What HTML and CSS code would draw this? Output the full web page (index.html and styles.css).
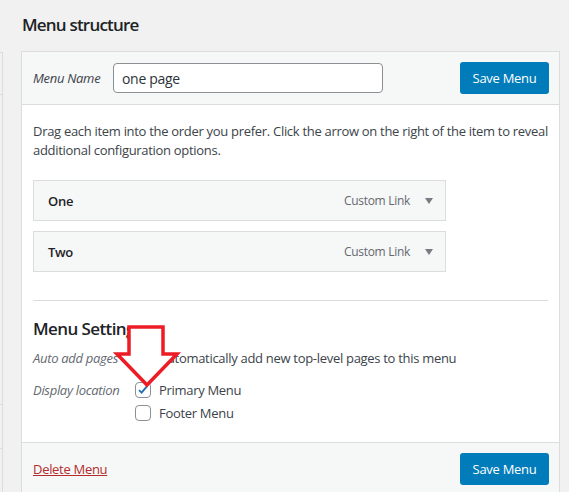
FILE: index.html
```html
<!DOCTYPE html>
<html lang="en">

<head>
    <meta charset="UTF-8">
    <meta name="viewport" content="width=device-width, initial-scale=1.0">
    <title>Menus</title>
    <link rel="stylesheet" href="styles.css">
</head>

<body>

    <div class="wrap">
        <div class="side">
            <div class="side-box"></div>
            <div class="side-box side-box-low"></div>
        </div>

        <div class="main">
            <h2 class="title">Menu structure</h2>

            <div class="menu-edit">
                <div class="menu-header">
                    <label class="name-label" for="menuName">Menu Name</label>
                    <input type="text" id="menuName" class="name-input" value="one page">
                    <button class="button-primary">Save Menu</button>
                </div>

                <div class="menu-body">
                    <p class="hint">Drag each item into the order you prefer. Click the arrow on the right of the item to reveal additional configuration options.</p>

                    <ul class="menu-items">
                        <li class="menu-item">
                            <span class="item-title">One</span>
                            <span class="item-type">Custom Link</span>
                            <span class="item-arrow"></span>
                        </li>
                        <li class="menu-item">
                            <span class="item-title">Two</span>
                            <span class="item-type">Custom Link</span>
                            <span class="item-arrow"></span>
                        </li>
                    </ul>

                    <div class="settings">
                        <h3 class="settings-title">Menu Settings</h3>

                        <div class="setting-row">
                            <span class="setting-label">Auto add pages</span>
                            <div class="setting-input">
                                <label class="check"><input type="checkbox"> Automatically add new top-level pages to this menu</label>
                            </div>
                        </div>

                        <div class="setting-row">
                            <span class="setting-label">Display location</span>
                            <div class="setting-input">
                                <label class="check"><input type="checkbox" checked> Primary Menu</label>
                                <label class="check"><input type="checkbox"> Footer Menu</label>
                            </div>
                        </div>

                        <!-- pointer drawn over the location options -->
                        <svg class="pointer" width="70" height="70" viewBox="0 0 70 70">
                            <polygon points="16,2 50,2 50,29 64,29 34,60 4,29 16,29" fill="#fff" stroke="#ed1c24" stroke-width="3.5" stroke-linejoin="miter"/>
                        </svg>
                    </div>
                </div>

                <div class="menu-footer">
                    <a href="#" class="delete-link">Delete Menu</a>
                    <button class="button-primary">Save Menu</button>
                </div>
            </div>
        </div>
    </div>

</body>

</html>
```

FILE: styles.css
```css
body {
    margin: 0;
    background-color: #f1f1f1;
    font-family: "Open Sans", "Noto Sans", sans-serif;
    font-size: 13px;
    letter-spacing: -0.3px;
    color: #3c434a;
}

.wrap {
    display: flex;
    height: 492px;
    overflow: hidden;
}

.side {
    width: 2px;
    flex-shrink: 0;
    margin-top: 52px;
    border-right: 1px solid #dcdcde;
}

.side-box {
    height: 41px;
    border-top: 1px solid #dcdcde;
    border-bottom: 1px solid #dcdcde;
}

.side-box-low {
    margin-top: 309px;
    height: 43px;
}

.main {
    flex: 1;
    margin-left: 18px;
    margin-right: 9px;
}

.title {
    font-size: 17px;
    font-weight: 600;
    letter-spacing: -0.8px;
    color: #1d2327;
    margin: 14px 0 15px 1px;
    line-height: 22px;
}

.menu-edit {
    background-color: #fff;
    border: 1px solid #dcdcde;
}

.menu-header {
    display: flex;
    align-items: center;
    padding: 10px 10px 10px 11px;
    background-color: #f6f7f7;
    border-bottom: 1px solid #dcdcde;
}

.name-label {
    font-style: italic;
    color: #3c434a;
    width: 80px;
}

.name-input {
    width: 270px;
    height: 30px;
    box-sizing: border-box;
    padding: 0 8px;
    border: 1px solid #8c8f94;
    border-radius: 4px;
    font-family: inherit;
    font-size: 14px;
    letter-spacing: -0.3px;
    color: #2c3338;
}

.button-primary {
    margin-left: auto;
    width: 89px;
    height: 32px;
    border: none;
    border-radius: 3px;
    background-color: #007cba;
    color: #fff;
    font-family: inherit;
    font-size: 13px;
    letter-spacing: -0.3px;
}

.menu-body {
    padding: 0 11px;
}

.hint {
    margin: 17px 0 20px;
    line-height: 19px;
}

.menu-items {
    list-style: none;
    margin: 0;
    padding: 0;
    width: 413px;
}

.menu-item {
    display: flex;
    align-items: center;
    height: 39px;
    margin-bottom: 10px;
    padding: 0 12px 0 14px;
    background-color: #f6f7f7;
    border: 1px solid #dcdcde;
}

.item-title {
    font-weight: 600;
    color: #1d2327;
}

.item-type {
    margin-left: auto;
    font-size: 12px;
    color: #646970;
}

.item-arrow {
    width: 0;
    height: 0;
    margin-left: 15px;
    border-left: 4px solid transparent;
    border-right: 4px solid transparent;
    border-top: 6px solid #787c82;
}

.settings {
    position: relative;
    margin-top: 28px;
    border-top: 1px solid #dcdcde;
    padding-bottom: 10px;
}

.settings-title {
    font-size: 17px;
    font-weight: 600;
    letter-spacing: -0.6px;
    color: #1d2327;
    margin: 17px 0 6px;
    line-height: 22px;
}

.setting-row {
    display: flex;
    margin-bottom: 8px;
}

.setting-label {
    width: 102px;
    font-style: italic;
    color: #646970;
    line-height: 24px;
}

.check {
    display: flex;
    align-items: center;
    height: 23px;
    color: #3c434a;
}

.check input {
    appearance: none;
    width: 16px;
    height: 16px;
    margin: 0 8px 0 0;
    border: 1px solid #8c8f94;
    border-radius: 4px;
    background-color: #fff;
}

.check input:checked {
    background: #fff url("data:image/svg+xml,%3Csvg xmlns='http://www.w3.org/2000/svg' viewBox='0 0 16 16'%3E%3Cpath d='M3.5 8.2 L6.4 11 L12.4 3.8' fill='none' stroke='%232271b1' stroke-width='2.2'/%3E%3C/svg%3E") center / 14px no-repeat;
}

.pointer {
    position: absolute;
    left: 80px;
    top: 24px;
}

.menu-footer {
    display: flex;
    align-items: center;
    padding: 10px 10px 10px 11px;
    background-color: #f6f7f7;
    border-top: 1px solid #dcdcde;
}

.delete-link {
    color: #b32d2e;
    text-decoration: underline;
}
```
